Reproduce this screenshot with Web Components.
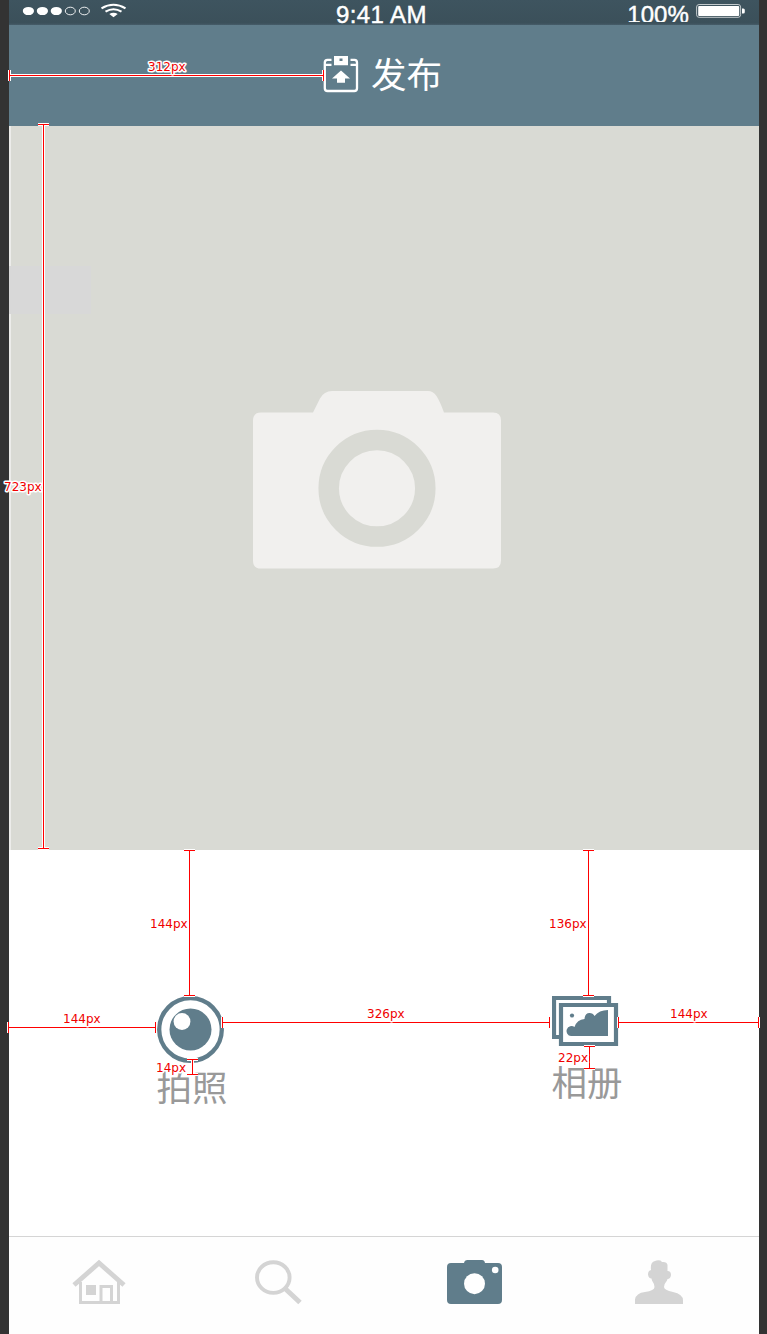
<!DOCTYPE html>
<html lang="zh-CN">
<head>
<meta charset="utf-8">
<title>发布</title>
<style>
html,body{margin:0;padding:0}
body{width:767px;height:1334px;overflow:hidden;background:#333}
</style>
</head>
<body>
<publish-screen></publish-screen>
<script>
const define = (name, html, after) => customElements.define(name, class extends HTMLElement {
  connectedCallback() {
    if (this.shadowRoot) return;
    const t = document.createElement('template');
    t.innerHTML = html;
    const root = this.attachShadow({mode: 'open'});
    root.appendChild(t.content.cloneNode(true));
    if (after) after(this, root);
  }
});

define('status-bar', `
<style>
:host{display:grid;grid-template-columns:327px 1fr auto;height:25px;background:linear-gradient(#3e545f,#3b505a 92%,#465d69);color:#fff;font:24px/30px "Liberation Sans",Arial,sans-serif;-webkit-text-stroke:.45px #fff}
.l{padding:1px 0 0 13px}
.t{letter-spacing:.4px}
.r{display:flex;justify-content:flex-end;padding-right:14px}
.pct{height:22px;overflow:hidden;margin-right:7px;letter-spacing:.1px}
svg{display:block}
.r svg{margin-top:3px}
</style>
<div class="l"><svg width="106" height="20" fill="#fff"><ellipse cx="6.4" cy="10" rx="5.600" ry="4.100"/><ellipse cx="20.4" cy="10" rx="5.600" ry="4.100"/><ellipse cx="34.3" cy="10" rx="5.600" ry="4.100"/><g fill="none" stroke="#fff" stroke-width=".9"><ellipse cx="48.3" cy="10" rx="5" ry="3.800"/><ellipse cx="62.3" cy="10" rx="5" ry="3.800"/></g><g fill="none" stroke="#fff" stroke-width="2.100"><path d="M79.500 7.400Q91.500 0.200 103.500 7.400M83.500 10.700Q91.500 5.900 99.500 10.700"/></g><path d="M87.300 13.100Q91.500 10.400 95.700 13.100L91.500 16.300Z"/></svg></div>
<div class="t">9:41 AM</div>
<div class="r"><span class="pct">100%</span><svg width="49" height="16"><rect x=".6" y="1.500" width="44" height="12.800" rx="2.500" fill="none" stroke="#c3cacd"/><rect x="2.200" y="3" width="41" height="10" rx="1" fill="#fff"/><path d="M46 5.500h1.300q1.500 0 1.500 1.500v2q0 1.500-1.500 1.500H46z" fill="#fff"/></svg></div>`);

define('nav-title', `
<style>
:host{display:flex;justify-content:center;height:101px;box-sizing:border-box;padding:31px 3px 0 0;background:#607d8b;color:#fff;font:35.500px/40px "Noto Sans CJK SC",sans-serif;gap:12px}
svg{display:block}
span{display:block;margin-top:-3px}
</style>
<svg width="36" height="37"><g fill="none" stroke="#fff" stroke-width="2.300"><path d="M8.500 3.800H4.500Q1.800 3.800 1.800 6.500V32.200q0 2.800 2.800 2.800H31.200q2.800 0 2.800-2.800V6.500Q34 3.800 31.500 3.800H27.500M2 8.800H8.500M27.500 8.800H34"/></g><path fill="#fff" fill-rule="evenodd" d="M11 0H25V9.200H11ZM16.500 2.500V5H19.500V2.500ZM18 14.500L27 22.500H22V26.700H14V22.500H9Z"/></svg>
<span><slot></slot></span>`);

define('photo-stage', `
<style>
:host{display:flex;justify-content:center;height:724px;box-sizing:border-box;padding:264px 16px 0 0;background:#d9dad4;border-left:2px solid #ececea;position:relative}
i{position:absolute;left:-2px;top:140px;width:82px;height:48px;background:#d8d8d8}
svg{display:block;width:250px;height:180px}
</style>
<i></i>
<svg viewBox="0 0 250 180"><path fill="#f1f0ee" d="M9 22.500H61L68 8.500Q72 1 80 1H176Q181 1 184.500 6Q188 11.500 192 22.500H241Q249 22.500 249 30.500V170.500Q249 178.500 241 178.500H9Q1 178.500 1 170.500V30.500Q1 22.500 9 22.500Z"/><circle cx="125" cy="98.300" r="48.300" fill="none" stroke="#d9dad4" stroke-width="20.500"/></svg>`);

define('source-action', `
<style>
:host{display:flex;flex-direction:column;width:74px;color:#999;font:35.500px/40px "Noto Sans CJK SC",sans-serif}
.i{height:var(--icon-h,67px)}
.t{margin:var(--gap,3px) 0 0 .5px;white-space:nowrap}
</style>
<div class="i"><slot name="icon"></slot></div><div class="t"><slot></slot></div>`);

define('source-picker', `
<style>
:host{display:flex;justify-content:space-between;align-items:flex-start;box-sizing:border-box;height:386px;padding:146px 134px 0 147px;background:#fff}
svg{display:block;margin-left:1px}
.album{--icon-h:51px;--gap:14px}
</style>
<source-action><svg slot="icon" width="67" height="67"><circle cx="33.500" cy="33.500" r="31.300" fill="#fff" stroke="#607d8b" stroke-width="4.300"/><circle cx="33.500" cy="33.500" r="21" fill="#607d8b"/><circle cx="25" cy="25.500" r="8.400" fill="#fff"/></svg>拍照</source-action>
<source-action class="album"><svg slot="icon" width="67" height="51" fill="none" stroke="#607d8b" stroke-width="4.200"><path d="M2 2H57V41H2Z"/><path d="M9 9H64V48H9Z" fill="#fff"/><circle cx="20" cy="19.500" r="2.100" stroke="none" fill="#607d8b"/><path stroke="none" fill="#607d8b" d="M56 14V40H19A5 5 0 1 1 22.500 31Q25 23.500 32.500 23Q33 17 37.500 17Q41 17 42.500 20Q47 14 56 14Z"/></svg>相册</source-action>`);

define('tab-bar', `
<style>
:host{display:grid;grid-template-columns:180px 179px 213px 156px;height:98px;box-sizing:border-box;border-top:1px solid #d5d5d5;background:#fefefe;padding-top:22px}
div{display:flex;justify-content:center}
svg{display:block}
</style>
<div><svg width="54" height="47"><path d="M2 26L27 4L52 26" fill="none" stroke="#d4d4d4" stroke-width="4.800"/><path d="M8.500 23V43.500H46.500V23M29 43V27.500H39.500V43" fill="none" stroke="#d4d4d4" stroke-width="3"/><path d="M14 26h10v10H14z" fill="#d4d4d4"/></svg></div>
<div><svg width="48" height="47" fill="none" stroke="#d4d4d4"><ellipse cx="18.300" cy="18.600" rx="16.300" ry="15.300" stroke-width="3.900"/><path d="M29.500 29L45 43.500" stroke-width="5"/></svg></div>
<div><svg width="55" height="46"><path fill="#607d8b" d="M4 4H17Q17.500 1 20.500 1H35Q37.500 1 38 4H51Q55 4 55 8V41Q55 45 51 45H4Q0 45 0 41V8Q0 4 4 4Z"/><circle cx="27.500" cy="24.700" r="10.500" fill="#fff"/><circle cx="48.200" cy="11" r="3.300" fill="#fff"/></svg></div>
<div><svg width="48" height="46"><path fill="#d4d4d4" d="M0 45V40.500Q1 34 10 33Q19.500 31.500 19.500 28Q19.500 25 17 21.500L16.500 19.500Q13.500 19.500 13 15.500Q13 11.500 16 11Q15 3 20 2Q22.500 .6 25.500 1.500L27 3Q32 2.500 32.500 6V12Q36 12 36 16Q35.500 20 32.500 20L32 21.500Q29 25 29 28Q29 31 38 33Q48 35 48 41.500V45Z"/></svg></div>`);

/* A dimension line: from/to along the axis, at = position across it. */
define('dimension-line', `
<style>
:host{position:absolute;left:0;top:0;width:767px;height:1334px;pointer-events:none}
svg{display:block}
text{font:12px "DejaVu Sans",Verdana,sans-serif;fill:#f00000;stroke:#fff;stroke-width:3px;stroke-linejoin:round;paint-order:stroke}
</style>
<svg width="767" height="1334" fill="none"><path class="h" stroke="#fff" stroke-width="3"/><path class="r" stroke="#f00"/><text></text></svg>`,
(host, root) => {
  const n = k => Number(host.getAttribute(k));
  const a = n('at') + .5, s = n('from'), e = n('to');
  const d = host.hasAttribute('vertical')
    ? `M${a} ${s}V${e}M${a-5.5} ${s+.5}h11M${a-5.5} ${e-.5}h11`
    : `M${s} ${a}H${e}M${s+.5} ${a-5.5}v11M${e-.5} ${a-5.5}v11`;
  root.querySelector('.r').setAttribute('d', d);
  root.querySelector('.h').setAttribute('d', d);
  const t = root.querySelector('text');
  t.setAttribute('x', n('tx'));
  t.setAttribute('y', n('ty'));
  t.textContent = host.getAttribute('label');
});

define('publish-screen', `
<style>
:host{display:block;position:relative;width:767px;height:1334px;box-sizing:border-box;padding:0 8px 0 9px;background:#333}
</style>
<status-bar></status-bar>
<nav-title>发布</nav-title>
<photo-stage></photo-stage>
<source-picker></source-picker>
<tab-bar></tab-bar>
<dimension-line at="75" from="9" to="324" tx="148" ty="71" label="312px"></dimension-line>
<dimension-line vertical at="43" from="124" to="849" tx="4" ty="491" label="723px"></dimension-line>
<dimension-line vertical at="189" from="850" to="996" tx="150" ty="928" label="144px"></dimension-line>
<dimension-line vertical at="588" from="850" to="996" tx="549" ty="928" label="136px"></dimension-line>
<dimension-line at="1027" from="8" to="156" tx="63" ty="1023" label="144px"></dimension-line>
<dimension-line at="1022" from="222" to="550" tx="367" ty="1018" label="326px"></dimension-line>
<dimension-line at="1022" from="618" to="759" tx="670" ty="1018" label="144px"></dimension-line>
<dimension-line vertical at="192" from="1059" to="1075" tx="156" ty="1072" label="14px"></dimension-line>
<dimension-line vertical at="589" from="1046" to="1069" tx="558" ty="1062" label="22px"></dimension-line>`);
</script>
</body>
</html>
